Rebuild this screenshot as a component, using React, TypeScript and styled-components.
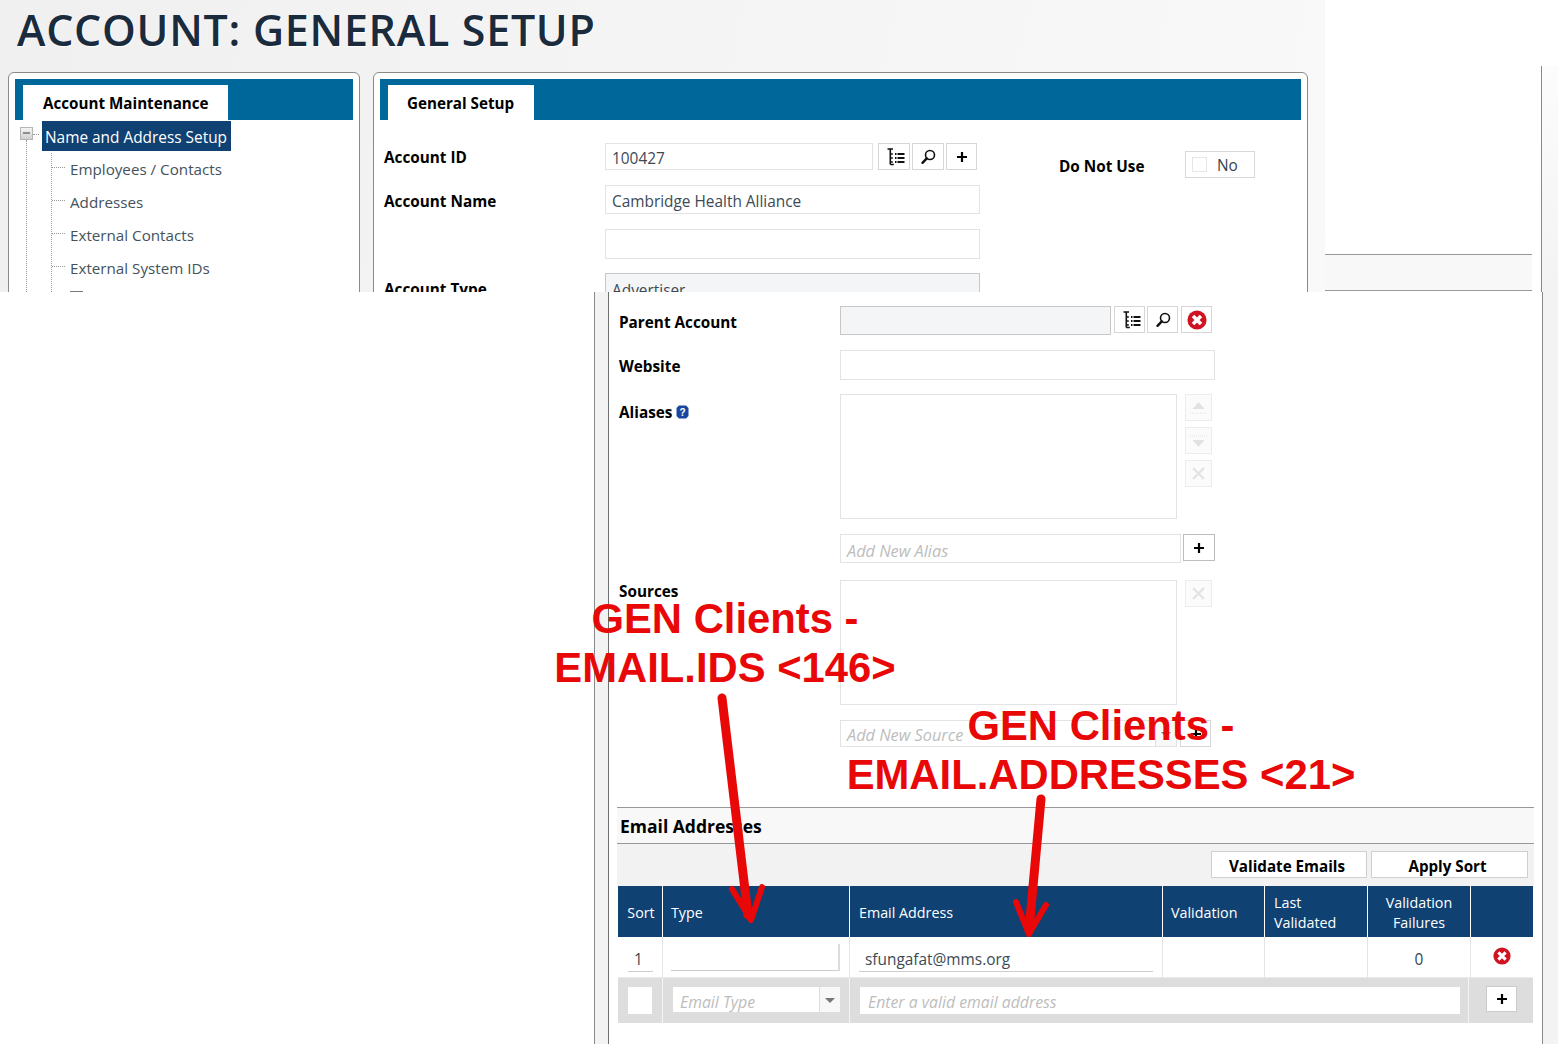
import React from 'react'
import styled, { createGlobalStyle } from 'styled-components'

const UI_FONT = '"Open Sans", "Noto Sans", "Liberation Sans", sans-serif'
const NAVY = '#0f4173'
const BLUE = '#00679b'
const FIELD_BORDER = '#e3e3e3'

const GlobalStyle = createGlobalStyle`
  html, body {
    margin: 0;
    padding: 0;
    background: #fff;
    overflow: hidden;
  }
  body {
    font-family: ${UI_FONT};
    font-size: 15.3px;
    color: #36454f;
  }
`

const Sheet = styled.div`
  position: relative;
  width: 1558px;
  height: 1044px;
  overflow: hidden;
`

// upper capture
const TopCapture = styled.div`
  display: flex;
  height: 292px;
  overflow: hidden;
`

const TopMain = styled.div`
  width: 1325px;
  flex-shrink: 0;
  background: linear-gradient(100deg, #f0f0f0 0%, #f5f5f5 60%, #f9f9f9 100%);
`

const Title = styled.h1`
  margin: 0;
  padding-left: 17px;
  height: 72px;
  box-sizing: border-box;
  padding-top: 2px;
  font-size: 43px;
  line-height: 56px;
  font-weight: 600;
  letter-spacing: 0.7px;
  color: #1a2b3e;
  text-shadow: 1px 1px 0 #fff;
`

const Panels = styled.div`
  display: flex;
  gap: 13px;
  padding-left: 8px;
`

const Panel = styled.div<{ $width: number }>`
  width: ${({ $width }) => $width}px;
  height: 300px;
  box-sizing: border-box;
  padding: 6px;
  background: #fff;
  border: 1px solid #8a8a8a;
  border-radius: 6px 6px 0 0;
`

const PanelHeader = styled.div`
  height: 41px;
  background: ${BLUE};
  padding: 6px 0 0 8px;
  box-sizing: border-box;
`

const PanelTab = styled.div<{ $width: number; $inset: number }>`
  width: ${({ $width }) => $width}px;
  height: 35px;
  box-sizing: border-box;
  padding-left: ${({ $inset }) => $inset}px;
  background: #fff;
  color: #000;
  font-size: 15.2px;
  font-weight: 700;
  line-height: 37px;
`

const TreeRoot = styled.div`
  display: flex;
  align-items: flex-start;
  margin-top: 1px;
  padding-left: 5px;
`

const Expander = styled.div`
  position: relative;
  width: 13px;
  height: 13px;
  margin-top: 6px;
  flex-shrink: 0;
  box-sizing: border-box;
  border: 1px solid #b5b5b5;
  background: linear-gradient(#f4f4f4, #d0d0d0);
  &::after {
    content: '';
    position: absolute;
    left: 2px;
    top: 4px;
    width: 7px;
    height: 2px;
    background: #8d8d8d;
  }
`

const RootDash = styled.div`
  width: 6px;
  margin: 13px 3px 0 0;
  border-top: 1px dotted #999;
`

const SelectedNode = styled.div`
  position: relative;
  width: 189px;
  height: 30px;
  box-sizing: border-box;
  padding: 0 3px;
  background: ${NAVY};
  color: #fff;
  font-size: 15.4px;
  line-height: 34px;
  white-space: nowrap;
`

const RootBranch = styled.div`
  margin: -11px 0 0 11px;
  padding: 13px 0 0 24px;
  border-left: 1px dotted #999;
`

const ChildBranch = styled.div`
  border-left: 1px dotted #999;
`

const ChildNode = styled.div`
  display: flex;
  height: 33px;
  align-items: flex-start;
  font-size: 15.2px;
  line-height: 33px;
  white-space: nowrap;
  color: #44525c;
`

const ChildDash = styled.div`
  width: 13px;
  margin: 14px 5px 0 0;
  border-top: 1px dotted #999;
`

const ChildCut = styled.div`
  width: 13px;
  height: 10px;
  margin: 6px 0 0 18px;
  background: #fff;
  border-top: 1px solid #777;
`

const FormBody = styled.div`
  display: flex;
  padding: 23px 0 0 4px;
`

const FormColumn = styled.div`
  width: 596px;
  flex-shrink: 0;
`

const FormRow = styled.div<{ $gap?: number }>`
  display: grid;
  grid-template-columns: 221px 1fr;
  margin-bottom: ${({ $gap }) => $gap ?? 15}px;
`

const FieldLabel = styled.div<{ $top?: number }>`
  padding-top: ${({ $top }) => $top ?? 6}px;
  font-size: 15.3px;
  font-weight: 700;
  line-height: 20px;
  color: #000;
  display: flex;
  align-items: center;
  gap: 4px;
  height: 20px;
`

const ControlRow = styled.div<{ $gap?: number }>`
  display: flex;
  gap: ${({ $gap }) => $gap ?? 2}px;
`

const Field = styled.div<{ $width?: number; $height: number; $muted?: boolean }>`
  width: ${({ $width }) => ($width ? `${$width}px` : 'auto')};
  height: ${({ $height }) => $height}px;
  box-sizing: border-box;
  border: 1px solid ${({ $muted }) => ($muted ? '#c8c8c8' : FIELD_BORDER)};
  background: ${({ $muted }) => ($muted ? '#f4f5f7' : '#fff')};
  padding-left: 6px;
  font-size: 15.4px;
  line-height: ${({ $height }) => $height + 3}px;
  color: #3c4a55;
  white-space: nowrap;
  overflow: hidden;
  flex-shrink: 0;
`

const Placeholder = styled.span`
  font-style: italic;
  color: #bdbdbd;
  font-size: 16.3px;
`

const IconButton = styled.div<{ $width?: number; $lead?: number; $strong?: boolean; $disabled?: boolean }>`
  width: ${({ $width }) => $width ?? 32}px;
  height: 27px;
  margin-left: ${({ $lead }) => $lead ?? 0}px;
  box-sizing: border-box;
  flex-shrink: 0;
  display: flex;
  align-items: center;
  justify-content: center;
  background: ${({ $disabled }) => ($disabled ? '#fbfbfb' : '#fff')};
  border: 1px solid ${({ $strong, $disabled }) => ($strong ? '#bdbdbd' : $disabled ? '#ececec' : '#d6d6d6')};
`

const SideButtons = styled.div`
  display: flex;
  flex-direction: column;
  gap: 6px;
  margin-left: 8px;
`

const DoNotUse = styled.div`
  display: flex;
  margin: 8px 0 0 79px;
`

const DoNotUseLabel = styled.div`
  width: 126px;
  padding-top: 5px;
  font-size: 15.3px;
  font-weight: 700;
  line-height: 20px;
  color: #000;
`

const ToggleBox = styled.div`
  width: 70px;
  height: 27px;
  box-sizing: border-box;
  border: 1px solid #d8d8d8;
  padding: 1px 0 0 6px;
  display: flex;
  align-items: center;
  gap: 10px;
  font-size: 15.4px;
`

const ToggleCheck = styled.div`
  width: 15px;
  height: 15px;
  margin-top: -1px;
  box-sizing: border-box;
  border: 1px solid #e6e6e6;
`

const TopSide = styled.div`
  flex: 1;
  display: flex;
  margin-top: 66px;
`

const TopSideInner = styled.div`
  width: 217px;
  flex-shrink: 0;
  padding-top: 188px;
  box-sizing: border-box;
  border-right: 1px solid #8a8a8a;
`

const TopBand = styled.div`
  width: 207px;
  height: 37px;
  box-sizing: border-box;
  background: #f8f8f8;
  border-top: 1px solid #999;
  border-bottom: 1px solid #999;
`

const TopRail = styled.div`
  flex: 1;
  background: linear-gradient(#fcfcfc, #f3f3f3);
`

// lower capture
const BottomCapture = styled.div`
  display: flex;
  height: 752px;
  margin-left: 594px;
`

const LeftRail = styled.div`
  width: 15px;
  flex-shrink: 0;
  box-sizing: border-box;
  background: #f3f3f3;
  border-left: 1px solid #8a8a8a;
  border-right: 1px solid #6f6f6f;
`

const BottomMain = styled.div`
  width: 934px;
  flex-shrink: 0;
  box-sizing: border-box;
  border-right: 1px solid #8a8a8a;
  padding: 14px 0 0 8px;
`

const BottomRail = styled.div`
  flex: 1;
  background: #f3f3f3;
`

const BottomForm = styled.div`
  padding-left: 2px;
`

const AliasLabelIcon = styled.svg`
  width: 13px;
  height: 14px;
  flex-shrink: 0;
`

const EmailSection = styled.section`
  width: 917px;
  margin-top: 60px;
`

const SectionHeading = styled.h2`
  margin: 0;
  height: 37px;
  box-sizing: border-box;
  padding-left: 3px;
  background: #f8f8f8;
  border-top: 1px solid #999;
  border-bottom: 1px solid #999;
  font-size: 17.5px;
  line-height: 37px;
  font-weight: 700;
  color: #000;
`

const SectionToolbar = styled.div`
  height: 42px;
  box-sizing: border-box;
  padding: 7px 6px 0 0;
  background: #f2f2f2;
  display: flex;
  justify-content: flex-end;
  gap: 4px;
`

const ToolbarButton = styled.div<{ $width: number }>`
  width: ${({ $width }) => $width}px;
  height: 27px;
  box-sizing: border-box;
  padding-right: 4px;
  background: #fff;
  border: 1px solid #cfcfcf;
  text-align: center;
  font-size: 15.2px;
  font-weight: 700;
  line-height: 28px;
  color: #000;
`

const EmailTable = styled.div`
  margin-left: 1px;
  width: 915px;
`

const TableRow = styled.div`
  display: grid;
  grid-template-columns: 45px 187px 313px 102px 103px 103px 62px;
`

const HeadCell = styled.div<{ $center?: boolean; $inset?: number }>`
  height: 51px;
  box-sizing: border-box;
  background: ${NAVY};
  border-right: 1px solid #fff;
  display: flex;
  align-items: center;
  justify-content: ${({ $center }) => ($center ? 'center' : 'flex-start')};
  text-align: ${({ $center }) => ($center ? 'center' : 'left')};
  padding: 3px 0 0 ${({ $inset }) => $inset ?? 0}px;
  color: #fff;
  font-size: 14.3px;
  line-height: 20px;
  &:last-child {
    border-right: 0;
  }
`

const BodyCell = styled.div<{ $center?: boolean }>`
  height: 40px;
  box-sizing: border-box;
  border-right: 1px solid #e4e4e4;
  display: flex;
  align-items: flex-start;
  justify-content: ${({ $center }) => ($center ? 'center' : 'flex-start')};
  font-size: 15.4px;
  line-height: 46px;
  &:last-child {
    border-right: 0;
  }
`

const UnderlineField = styled.div<{ $width: number; $left: number }>`
  width: ${({ $width }) => $width}px;
  height: 35px;
  margin-left: ${({ $left }) => $left}px;
  box-sizing: border-box;
  border-bottom: 1px solid #cdcdcd;
  padding-left: 6px;
  line-height: 46px;
  white-space: nowrap;
  color: #3c4a55;
`

const BlankTypeField = styled.div`
  width: 169px;
  height: 27px;
  margin: 7px 0 0 8px;
  box-sizing: border-box;
  border-bottom: 1px solid #cdcdcd;
  border-right: 2px solid #dcdcdc;
`

const RowRemove = styled.div`
  margin-top: 10px;
  line-height: 0;
`

const AddRow = styled.div`
  display: grid;
  grid-template-columns: 45px 187px 619px 64px;
  height: 46px;
  box-sizing: border-box;
  background: #ddd;
  border-top: 1px solid #eaeaea;
`

const AddCell = styled.div<{ $last?: boolean }>`
  box-sizing: border-box;
  padding-top: 9px;
  border-right: ${({ $last }) => ($last ? '0' : '1px solid #f4f4f4')};
  display: flex;
`

const AddField = styled.div<{ $width: number; $left: number; $select?: boolean }>`
  width: ${({ $width }) => $width}px;
  height: ${({ $select }) => ($select ? 25 : 27)}px;
  margin-left: ${({ $left }) => $left}px;
  background: #fff;
  box-sizing: border-box;
  padding-left: ${({ $select }) => ($select ? 7 : 8)}px;
  line-height: 30px;
  white-space: nowrap;
  overflow: hidden;
  display: flex;
  justify-content: space-between;
  ${Placeholder} {
    font-size: 15.8px;
  }
`

const SelectArrowBox = styled.div`
  width: 21px;
  height: 26px;
  flex-shrink: 0;
  box-sizing: border-box;
  background: #f8f8f8;
  border-left: 1px solid #ddd;
  display: flex;
  align-items: center;
  justify-content: center;
  &::after {
    content: '';
    border-left: 5px solid transparent;
    border-right: 5px solid transparent;
    border-top: 5px solid #777;
  }
`

const AddButton = styled.div`
  width: 31px;
  height: 26px;
  margin: -1px 0 0 17px;
  box-sizing: border-box;
  background: #fff;
  border: 1px solid #ccc;
  display: flex;
  align-items: center;
  justify-content: center;
`

const SourceSelect = styled.div`
  position: relative;
  width: 337px;
  height: 27px;
  box-sizing: border-box;
  border: 1px solid ${FIELD_BORDER};
  padding-left: 6px;
  line-height: 29px;
  overflow: hidden;
  white-space: nowrap;
  display: flex;
  justify-content: space-between;
  flex-shrink: 0;
`

// red hand-drawn notes on top of the captures
const Note = styled.div<{ $left: number; $top: number; $width: number }>`
  position: absolute;
  left: ${({ $left }) => $left}px;
  top: ${({ $top }) => $top}px;
  width: ${({ $width }) => $width}px;
  text-align: center;
  color: #e80808;
  font-family: "Liberation Sans", Arial, sans-serif;
  font-size: 41.8px;
  font-weight: 700;
  line-height: 49px;
  white-space: nowrap;
`

const ArrowLayer = styled.svg`
  position: absolute;
  left: 0;
  top: 0;
  pointer-events: none;
`

const TreeIcon = () => (
  <svg width="22" height="18" viewBox="0 0 22 18" fill="none" stroke="#111" strokeWidth="1.6">
    <path d="M4.500 1h5.500M7.300 1v15.500M7.300 16.500h3.500M7.300 6h2.500M7.300 10h2.500M7.300 14h2.500" />
    <path d="M12 6h1.500M14.500 6h7M12 10h1.500M14.500 10h7M12 14h1.500M14.500 14h7" strokeWidth="2" />
  </svg>
)

const SearchIcon = () => (
  <svg width="16" height="16" viewBox="0 0 16 16" fill="none" stroke="#111">
    <circle cx="10" cy="6" r="4.500" strokeWidth="1.6" />
    <path d="M6.800 9.300L2.500 13.800" strokeWidth="2.400" strokeLinecap="round" />
  </svg>
)

const PlusIcon = () => (
  <svg width="10" height="10" viewBox="0 0 10 10" stroke="#000" strokeWidth="2.2">
    <path d="M5 0v10M0 5h10" />
  </svg>
)

const RemoveIcon = ({ size }: { size: number }) => (
  <svg width={size} height={size} viewBox="0 0 18 18">
    <circle cx="9" cy="9" r="8.600" fill="#cf1322" />
    <path d="M5.400 5.400l7.200 7.200M12.600 5.400l-7.200 7.200" stroke="#fff" strokeWidth="3.200" />
  </svg>
)

const FadedX = () => (
  <svg width="13" height="13" viewBox="0 0 13 13" stroke="#e4e4e4" strokeWidth="2.400">
    <path d="M1 1l11 11M12 1L1 12" />
  </svg>
)

const FadedMove = ({ down }: { down?: boolean }) => (
  <svg width="17" height="14" viewBox="0 0 17 14" fill="#e2e2e2">
    {down ? (
      <>
        <path d="M0 2h17" stroke="#e2e2e2" strokeDasharray="1 1" />
        <path d="M2.500 6h12l-6 7z" />
      </>
    ) : (
      <>
        <path d="M2.500 8h12l-6-7z" />
        <path d="M0 12h17" stroke="#e2e2e2" strokeDasharray="1 1" />
      </>
    )}
  </svg>
)

const HelpIcon = () => (
  <AliasLabelIcon viewBox="0 0 13 14">
    <path d="M3 .5h7L12.500 3v8L10 13.500H3L.5 11V3z" fill="#1a46a0" />
    <text x="6.500" y="10.800" textAnchor="middle" fontSize="10" fontWeight="700" fill="#fff" fontFamily="Liberation Sans, sans-serif">?</text>
  </AliasLabelIcon>
)

const TREE_ITEMS = ['Employees / Contacts', 'Addresses', 'External Contacts', 'External System IDs']

const App = () => (
  <Sheet>
    <GlobalStyle />
    <TopCapture>
      <TopMain>
        <Title>ACCOUNT: GENERAL SETUP</Title>
        <Panels>
          <Panel $width={352}>
            <PanelHeader>
              <PanelTab $width={205} $inset={20}>Account Maintenance</PanelTab>
            </PanelHeader>
            <TreeRoot>
              <Expander />
              <RootDash />
              <SelectedNode>Name and Address Setup</SelectedNode>
            </TreeRoot>
            <RootBranch>
              <ChildBranch>
                {TREE_ITEMS.map(item => (
                  <ChildNode key={item}>
                    <ChildDash />
                    {item}
                  </ChildNode>
                ))}
                <ChildNode>
                  <ChildCut />
                </ChildNode>
              </ChildBranch>
            </RootBranch>
          </Panel>
          <Panel $width={935}>
            <PanelHeader>
              <PanelTab $width={146} $inset={19}>General Setup</PanelTab>
            </PanelHeader>
            <FormBody>
              <FormColumn>
                <FormRow>
                  <FieldLabel $top={4}>Account ID</FieldLabel>
                  <ControlRow>
                    <Field $width={268} $height={27}>100427</Field>
                    <IconButton $lead={3}><TreeIcon /></IconButton>
                    <IconButton><SearchIcon /></IconButton>
                    <IconButton $width={31}><PlusIcon /></IconButton>
                  </ControlRow>
                </FormRow>
                <FormRow>
                  <FieldLabel>Account Name</FieldLabel>
                  <Field $height={29}>Cambridge Health Alliance</Field>
                </FormRow>
                <FormRow $gap={14}>
                  <div />
                  <Field $height={30} />
                </FormRow>
                <FormRow>
                  <FieldLabel>Account Type</FieldLabel>
                  <Field $height={30} $muted>Advertiser</Field>
                </FormRow>
              </FormColumn>
              <DoNotUse>
                <DoNotUseLabel>Do Not Use</DoNotUseLabel>
                <ToggleBox>
                  <ToggleCheck />
                  No
                </ToggleBox>
              </DoNotUse>
            </FormBody>
          </Panel>
        </Panels>
      </TopMain>
      <TopSide>
        <TopSideInner>
          <TopBand />
        </TopSideInner>
        <TopRail />
      </TopSide>
    </TopCapture>

    <BottomCapture>
      <LeftRail />
      <BottomMain>
        <BottomForm>
          <FormRow>
            <FieldLabel>Parent Account</FieldLabel>
            <ControlRow>
              <Field $width={271} $height={29} $muted />
              <IconButton $lead={1} $width={31}><TreeIcon /></IconButton>
              <IconButton $width={31}><SearchIcon /></IconButton>
              <IconButton $lead={1} $width={31}><RemoveIcon size={20} /></IconButton>
            </ControlRow>
          </FormRow>
          <FormRow $gap={14}>
            <FieldLabel>Website</FieldLabel>
            <Field $width={375} $height={30} />
          </FormRow>
          <FormRow>
            <FieldLabel $top={8}>Aliases <HelpIcon /></FieldLabel>
            <ControlRow $gap={0}>
              <Field $width={337} $height={125} />
              <SideButtons>
                <IconButton $width={27} $disabled><FadedMove /></IconButton>
                <IconButton $width={27} $disabled><FadedMove down /></IconButton>
                <IconButton $width={27} $disabled><FadedX /></IconButton>
              </SideButtons>
            </ControlRow>
          </FormRow>
          <FormRow $gap={17}>
            <div />
            <ControlRow>
              <Field $width={341} $height={29}><Placeholder>Add New Alias</Placeholder></Field>
              <IconButton $strong><PlusIcon /></IconButton>
            </ControlRow>
          </FormRow>
          <FormRow>
            <FieldLabel $top={1}>Sources</FieldLabel>
            <ControlRow $gap={0}>
              <Field $width={337} $height={125} />
              <SideButtons>
                <IconButton $width={27} $disabled><FadedX /></IconButton>
              </SideButtons>
            </ControlRow>
          </FormRow>
          <FormRow $gap={0}>
            <div />
            <ControlRow $gap={3}>
              <SourceSelect>
                <Placeholder>Add New Source</Placeholder>
                <SelectArrowBox />
              </SourceSelect>
              <IconButton $width={31}><PlusIcon /></IconButton>
            </ControlRow>
          </FormRow>
        </BottomForm>

        <EmailSection>
          <SectionHeading>Email Addresses</SectionHeading>
          <SectionToolbar>
            <ToolbarButton $width={156}>Validate Emails</ToolbarButton>
            <ToolbarButton $width={157}>Apply Sort</ToolbarButton>
          </SectionToolbar>
          <EmailTable>
            <TableRow>
              <HeadCell $center $inset={2}>Sort</HeadCell>
              <HeadCell $inset={8}>Type</HeadCell>
              <HeadCell $inset={9}>Email Address</HeadCell>
              <HeadCell $inset={8}>Validation</HeadCell>
              <HeadCell $inset={9}>Last<br />Validated</HeadCell>
              <HeadCell $center>Validation<br />Failures</HeadCell>
              <HeadCell />
            </TableRow>
            <TableRow>
              <BodyCell>
                <UnderlineField $width={25} $left={10}>1</UnderlineField>
              </BodyCell>
              <BodyCell>
                <BlankTypeField />
              </BodyCell>
              <BodyCell>
                <UnderlineField $width={294} $left={9}>sfungafat@mms.org</UnderlineField>
              </BodyCell>
              <BodyCell />
              <BodyCell />
              <BodyCell $center>0</BodyCell>
              <BodyCell $center>
                <RowRemove><RemoveIcon size={18} /></RowRemove>
              </BodyCell>
            </TableRow>
            <AddRow>
              <AddCell>
                <AddField $width={24} $left={10} />
              </AddCell>
              <AddCell>
                <AddField $width={167} $left={10} $select>
                  <Placeholder>Email Type</Placeholder>
                  <SelectArrowBox />
                </AddField>
              </AddCell>
              <AddCell>
                <AddField $width={600} $left={10}><Placeholder>Enter a valid email address</Placeholder></AddField>
              </AddCell>
              <AddCell $last>
                <AddButton><PlusIcon /></AddButton>
              </AddCell>
            </AddRow>
          </EmailTable>
        </EmailSection>
      </BottomMain>
      <BottomRail />
    </BottomCapture>

    <Note $left={525} $top={594} $width={400}>GEN Clients -<br />EMAIL.IDS &lt;146&gt;</Note>
    <Note $left={801} $top={701} $width={600}>GEN Clients -<br />EMAIL.ADDRESSES &lt;21&gt;</Note>
    <ArrowLayer width="1558" height="1044" viewBox="0 0 1558 1044" fill="none" stroke="#e80808" strokeLinecap="round" strokeLinejoin="round">
      <path d="M722 698L748 915" strokeWidth="9" />
      <path d="M732 889L751 920L762 887" strokeWidth="6" />
      <path d="M1041 799L1029 930" strokeWidth="9" />
      <path d="M1016 902L1029 934L1046 905" strokeWidth="6" />
    </ArrowLayer>
  </Sheet>
)

export default App
